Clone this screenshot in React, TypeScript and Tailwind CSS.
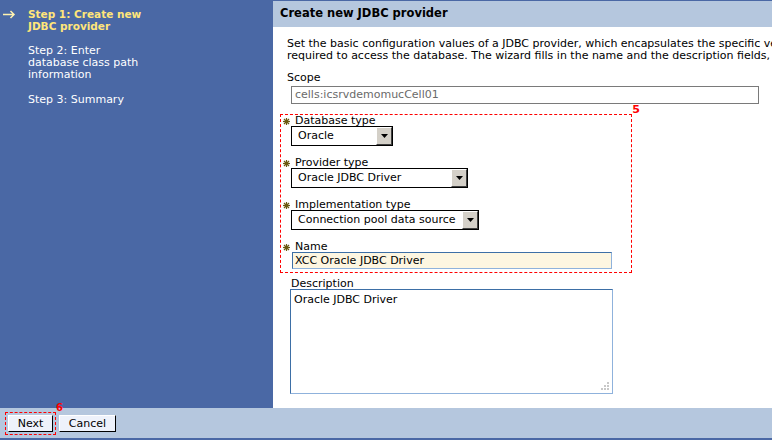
import React from 'react';

const font = { fontFamily: '"DejaVu Sans", Verdana, sans-serif' };

function Req() {
  return (
    <svg width="7" height="7" viewBox="0 0 7 7" className="shrink-0">
      <g stroke="#6b5a12" strokeWidth="1.2">
        <line x1="3.5" y1="0" x2="3.5" y2="7" />
        <line x1="0" y1="3.5" x2="7" y2="3.5" />
        <line x1="1" y1="1" x2="6" y2="6" />
        <line x1="6" y1="1" x2="1" y2="6" />
      </g>
    </svg>
  );
}

function Select({ value, width }: { value: string; width: string }) {
  return (
    <div className={`flex h-[20px] border border-black bg-white ${width}`}>
      <div className="flex-1 pl-[6px] leading-[18px] whitespace-nowrap overflow-hidden">{value}</div>
      <div className="w-[16px] h-[18px] bg-[#d4d0c8] border border-t-white border-l-white border-r-[#404040] border-b-[#404040] flex items-center justify-center">
        <svg width="7" height="4" viewBox="0 0 7 4">
          <path d="M0 0h7L3.5 4z" fill="#000" />
        </svg>
      </div>
    </div>
  );
}

function Field({ label, children }: { label: string; children: React.ReactNode }) {
  return (
    <div className="flex flex-col">
      <div className="flex items-center gap-[5px] h-[10px] pl-[2px]">
        <Req />
        <span className="leading-[10px]">{label}</span>
      </div>
      <div className="pl-[10px]">{children}</div>
    </div>
  );
}

export default function App() {
  return (
    <div className="w-[772px] h-[440px] flex flex-col overflow-hidden text-[11px] text-black" style={font}>
      <div className="flex h-[408px]">
        <div className="w-[273px] bg-[#4a68a5] pt-[8px] text-white">
          <div className="flex">
            <div className="w-[28px] pl-[3px] pt-[2px]">
              <svg width="13" height="9" viewBox="0 0 13 9">
                <path d="M0 4.5h11M7.5 1l3.5 3.5L7.5 8" stroke="#fff2b0" strokeWidth="1.5" fill="none" />
              </svg>
            </div>
            <div className="font-bold text-[#ffe57a] leading-[12px] text-[10.5px]">
              Step 1: Create new
              <br />
              JDBC provider
            </div>
          </div>
          <div className="pl-[28px] mt-[13px] leading-[12px]">
            Step 2: Enter
            <br />
            database class path
            <br />
            information
          </div>
          <div className="pl-[28px] mt-[13px] leading-[12px]">Step 3: Summary</div>
        </div>
        <div className="flex-1 bg-white border-t border-[#4a68a5] overflow-hidden">
          <div className="h-[26px] bg-[#b5c7de] pl-[7px] flex items-center font-bold text-[11.5px] whitespace-nowrap">
            Create new JDBC provider
          </div>
          <div className="pl-[14px] pt-[11px] whitespace-nowrap leading-[12px]">
            <div>Set the basic configuration values of a JDBC provider, which encapsulates the specific vendor JDBC driver implementation</div>
            <div>required to access the database. The wizard fills in the name and the description fields, but you can type different values.</div>
          </div>
          <div className="pl-[14px] mt-[10px] leading-[11px]">Scope</div>
          <div className="pl-[18px] mt-[3px]">
            <div className="w-[468px] h-[18px] border border-[#7a7a7a] pl-[3px] leading-[16px] text-[#6a6a6a]">
              cells:icsrvdemomucCell01
            </div>
          </div>
          <div className="relative ml-[7px] mt-[10px] w-[352px] h-[159px] border border-dashed border-[#ff0000] pt-[1px] flex flex-col gap-[12px]">
            <span className="absolute -top-[13px] -right-[9px] text-[#ff0000] font-bold text-[11px]">5</span>
            <Field label="Database type">
              <Select value="Oracle" width="w-[102px]" />
            </Field>
            <Field label="Provider type">
              <Select value="Oracle JDBC Driver" width="w-[177px]" />
            </Field>
            <Field label="Implementation type">
              <Select value="Connection pool data source" width="w-[188px]" />
            </Field>
            <Field label="Name">
              <div className="ml-[1px] w-[320px] h-[17px] bg-[#fdf6e1] border border-[#3d6fa6] border-b-[#8fb2dc] border-r-[#8fb2dc] pl-[2px] leading-[15px]">
                XCC Oracle JDBC Driver
              </div>
            </Field>
          </div>
          <div className="pl-[18px] mt-[5px] leading-[11px]">Description</div>
          <div className="pl-[17px]">
            <div className="relative w-[323px] h-[105px] border border-[#3d6fa6] border-b-[#8fb2dc] border-r-[#8fb2dc] pl-[3px] pt-[4px] leading-[11px]">
              Oracle JDBC Driver
              <svg className="absolute right-[2px] bottom-[2px]" width="9" height="9" viewBox="0 0 9 9">
                <g fill="#c8c8c8">
                  <rect x="6" y="0" width="2" height="2" />
                  <rect x="3" y="3" width="2" height="2" />
                  <rect x="6" y="3" width="2" height="2" />
                  <rect x="0" y="6" width="2" height="2" />
                  <rect x="3" y="6" width="2" height="2" />
                  <rect x="6" y="6" width="2" height="2" />
                </g>
              </svg>
            </div>
          </div>
        </div>
      </div>
      <div className="h-[32px] bg-[#b5c7de] border-b-2 border-[#4a68a5] flex items-center pl-[5px] gap-[3px]">
        <div className="relative border border-dashed border-[#ff0000] p-[2px]">
          <span className="absolute -top-[10px] -right-[8px] text-[#ff0000] font-bold text-[10px] leading-[10px]">6</span>
          <div className="w-[45px] h-[17px] bg-[#eef2fb] border border-t-white border-l-white border-r-black border-b-black text-center leading-[15px]">
            Next
          </div>
        </div>
        <div className="w-[57px] h-[17px] bg-[#eef2fb] border border-t-white border-l-white border-r-black border-b-black text-center leading-[15px]">
          Cancel
        </div>
      </div>
    </div>
  );
}
